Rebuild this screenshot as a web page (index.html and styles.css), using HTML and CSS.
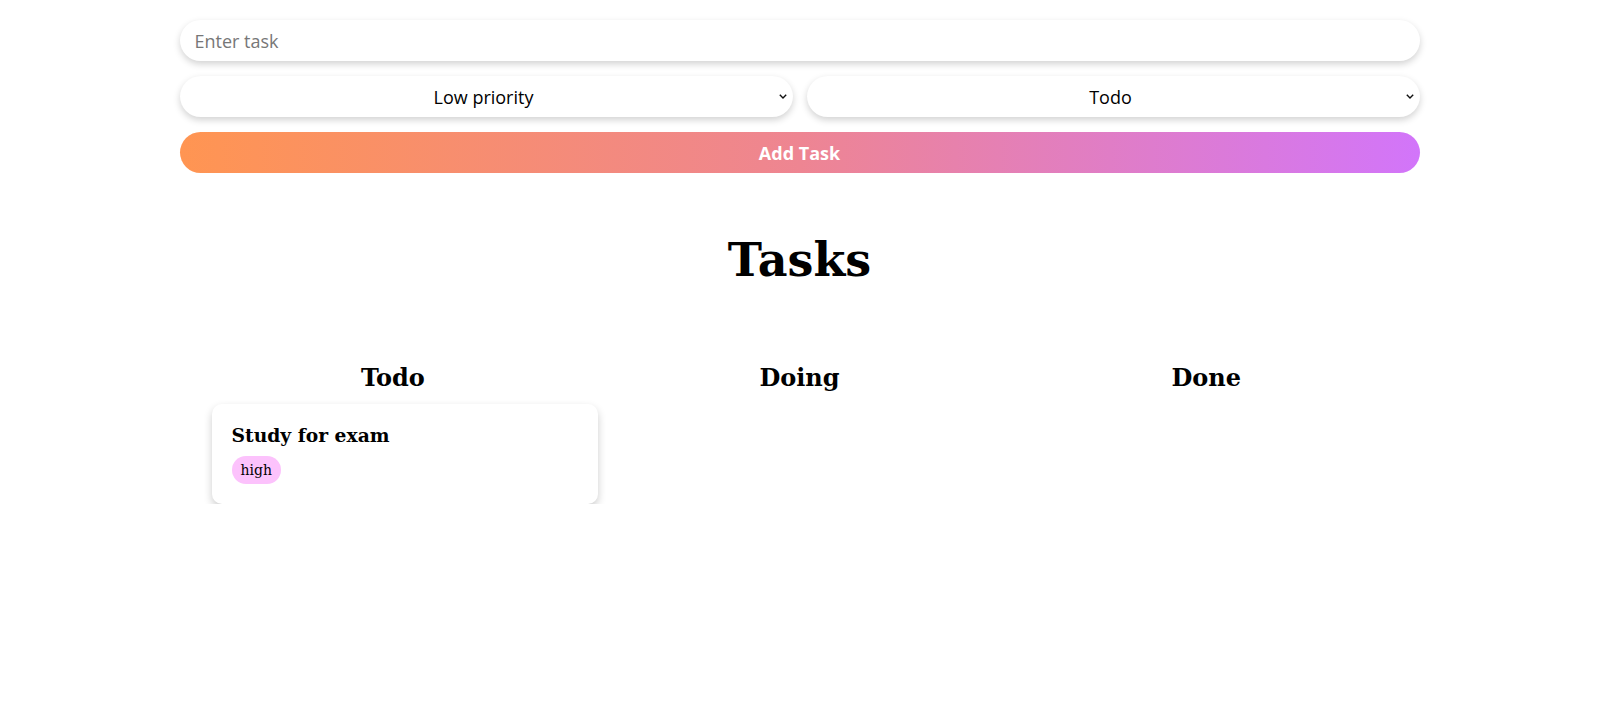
FILE: index.html
```html
<!DOCTYPE html>
<html>
<head>
<meta charset="utf-8">
<link rel="stylesheet" href="styles.css">
</head>
<body>
<div class="app">
  <form class="task-form">
    <input class="task-input" type="text" placeholder="Enter task">
    <div class="select-row">
      <select class="task-select">
        <option>Low priority</option>
        <option>Medium priority</option>
        <option>High priority</option>
      </select>
      <select class="task-select">
        <option>Todo</option>
        <option>Doing</option>
        <option>Done</option>
      </select>
    </div>
    <button class="add-btn" type="button">Add Task</button>
  </form>
  <h1 class="title">Tasks</h1>
  <div class="board">
    <div class="column">
      <h2 class="col-title">Todo</h2>
      <div class="card">
        <h3 class="card-title">Study for exam</h3>
        <span class="badge">high</span>
      </div>
    </div>
    <div class="column">
      <h2 class="col-title">Doing</h2>
    </div>
    <div class="column">
      <h2 class="col-title">Done</h2>
    </div>
  </div>
</div>
</body>
</html>
```
FILE: styles.css
```css
* { box-sizing: border-box; }
body {
  margin: 0;
  background: #fff;
  font-family: "DejaVu Serif", serif;
  color: #000;
}
.app {
  width: 1240px;
  margin: 0 auto;
  padding-top: 20px;
}
.task-form {
  display: flex;
  flex-direction: column;
  gap: 15px;
}
.task-input,
.task-select,
.add-btn {
  height: 41px;
  border: none;
  border-radius: 21px;
  font-family: "Open Sans", sans-serif;
  font-size: 18px;
  outline: none;
}
.task-input,
.task-select {
  background-color: #fff;
  box-shadow: 0 3px 7px rgba(0, 0, 0, 0.18);
}
.task-input {
  padding: 0 15px;
  color: #000;
}
.task-input::placeholder { color: #777; }
.select-row {
  display: flex;
  gap: 14px;
}
.task-select {
  flex: 1;
  appearance: none;
  -webkit-appearance: none;
  text-align: center;
  text-align-last: center;
  color: #000;
  padding: 0 20px 0 15px;
  background-image: url("data:image/svg+xml;utf8,<svg xmlns='http://www.w3.org/2000/svg' width='8' height='5' viewBox='0 0 8 5'><path d='M0.8 0.8 L4 4 L7.2 0.8' fill='none' stroke='%23111' stroke-width='1.4'/></svg>");
  background-repeat: no-repeat;
  background-position: right 6px center;
  background-size: 8px 5px;
}
.add-btn {
  background: linear-gradient(90deg, #ff9552 0%, #ee8592 50%, #d275fa 100%);
  color: #fff;
  font-weight: 700;
}
.title {
  text-align: center;
  font-size: 46px;
  font-weight: 700;
  margin: 60px 0 0;
}
.board {
  display: grid;
  grid-template-columns: repeat(3, 1fr);
  gap: 20px;
  padding: 0 20px;
  margin-top: 76px;
}
.column {
  display: flex;
  flex-direction: column;
  align-items: stretch;
}
.col-title {
  text-align: center;
  font-size: 24px;
  margin: 0 0 12px;
}
.card {
  background: #fff;
  border-radius: 10px;
  box-shadow: 0 4px 8px rgba(0, 0, 0, 0.2);
  padding: 20px 20px 20px;
  margin-left: 12px;
  width: 100%;
}
.card-title {
  font-size: 18.72px;
  margin: 0 0 10px;
}
.badge {
  display: inline-block;
  background: #fcc2fc;
  border-radius: 14px;
  padding: 6px 9px;
  font-size: 14px;
}
```
